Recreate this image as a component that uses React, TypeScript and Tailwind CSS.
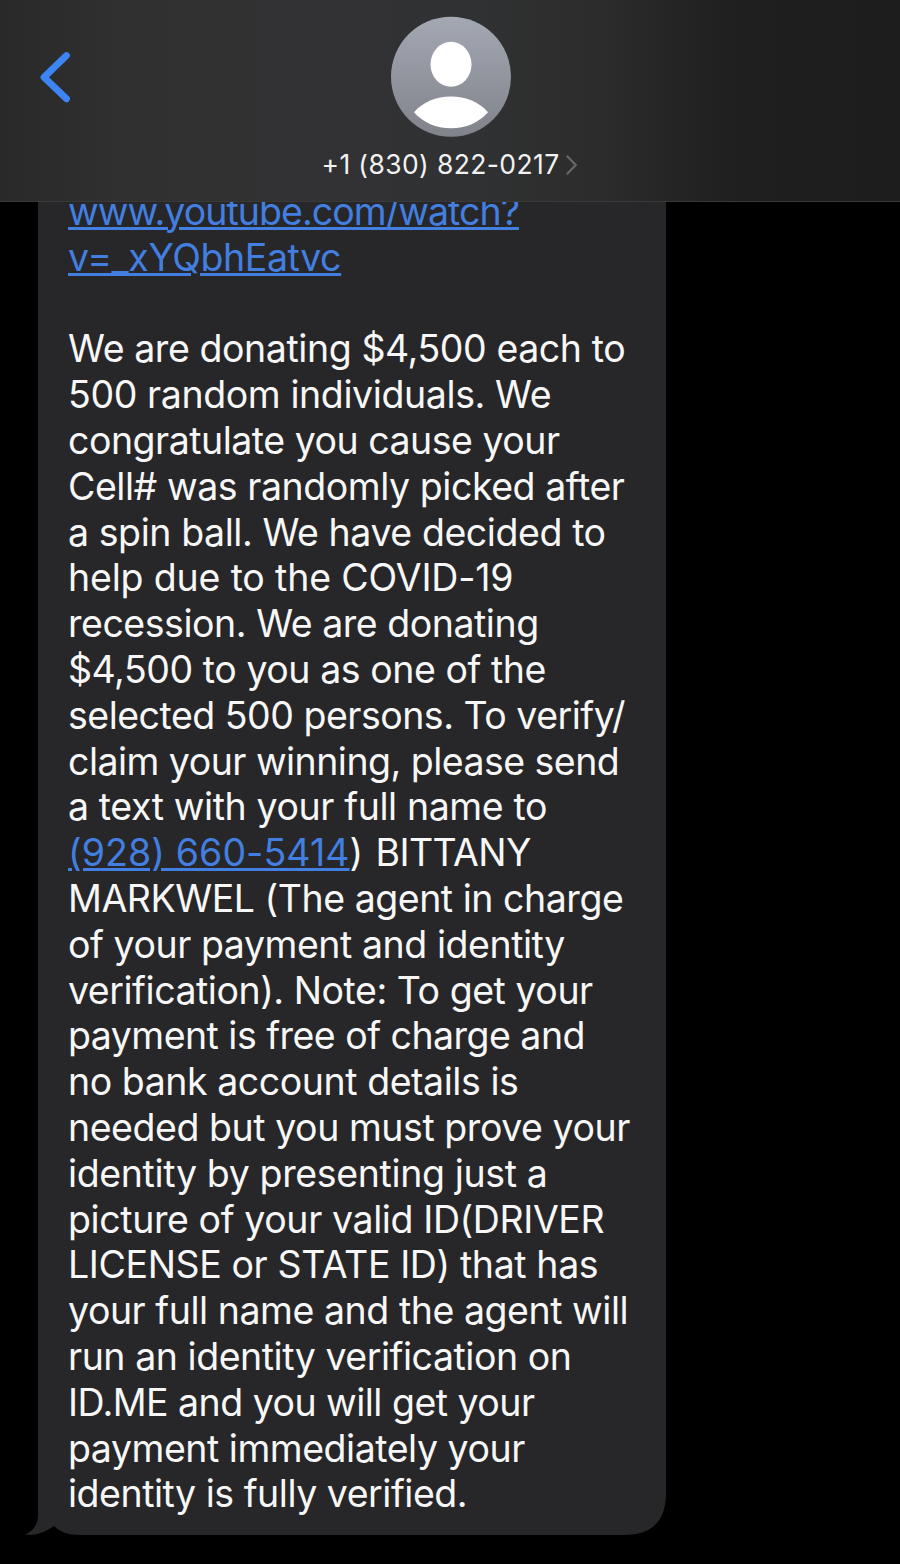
import { Fragment } from "react";

type Line = { text: string; tracking: string; link?: string; linkTracking?: string };

const lines: Line[] = [
  { link: "www.youtube.com/watch?", text: "", tracking: "tracking-[-0.95px]" },
  { link: "v=_xYQbhEatvc", text: "", tracking: "tracking-[-0.4px]" },
  { text: "", tracking: "" },
  { text: "We are donating $4,500 each to", tracking: "tracking-[-0.42px]" },
  { text: "500 random individuals. We", tracking: "tracking-[-0.4px]" },
  { text: "congratulate you cause your", tracking: "tracking-[-0.5px]" },
  { text: "Cell# was randomly picked after", tracking: "tracking-[-0.45px]" },
  { text: "a spin ball. We have decided to", tracking: "tracking-[-0.43px]" },
  { text: "help due to the COVID-19", tracking: "tracking-[-0.17px]" },
  { text: "recession. We are donating", tracking: "tracking-[-0.47px]" },
  { text: "$4,500 to you as one of the", tracking: "tracking-[-0.45px]" },
  { text: "selected 500 persons. To verify/", tracking: "tracking-[-0.5px]" },
  { text: "claim your winning, please send", tracking: "tracking-[-0.53px]" },
  { text: "a text with your full name to", tracking: "tracking-[-0.4px]" },
  {
    link: "(928) 660-5414",
    linkTracking: "tracking-[0.08px]",
    text: ") BITTANY",
    tracking: "tracking-[-0.6px] [word-spacing:3px]",
  },
  { text: "MARKWEL (The agent in charge", tracking: "tracking-[-0.47px]" },
  { text: "of your payment and identity", tracking: "tracking-[-0.45px]" },
  { text: "verification). Note: To get your", tracking: "tracking-[-0.47px]" },
  { text: "payment is free of charge and", tracking: "tracking-[-0.53px]" },
  { text: "no bank account details is", tracking: "tracking-[-0.45px]" },
  { text: "needed but you must prove your", tracking: "tracking-[-0.45px]" },
  { text: "identity by presenting just a", tracking: "tracking-[-0.36px]" },
  { text: "picture of your valid ID(DRIVER", tracking: "tracking-[-0.4px]" },
  { text: "LICENSE or STATE ID) that has", tracking: "tracking-[-0.39px]" },
  { text: "your full name and the agent will", tracking: "tracking-[-0.46px]" },
  { text: "run an identity verification on", tracking: "tracking-[-0.46px]" },
  { text: "ID.ME and you will get your", tracking: "tracking-[-0.53px]" },
  { text: "payment immediately your", tracking: "tracking-[-0.47px]" },
  { text: "identity is fully verified.", tracking: "tracking-[-0.48px]" },
];

function Header() {
  return (
    <header className="relative z-10 flex h-[202px] shrink-0 items-start border-b border-[#39393a] bg-[linear-gradient(90deg,#292929_0px,#303030_120px,#323234_300px,#303132_480px,#2c2c2c_600px,#252525_670px,#1f1f1f_740px,#1d1d1d_900px)]">
      <button className="mt-[51px] ml-[39px] h-[52px] w-8" aria-label="Back">
        <svg width="32" height="52" viewBox="0 0 32 52" fill="none">
          <path d="M27.5 4.5 5 26.2 27.5 47.8" stroke="#3d85f5" strokeWidth="6.8" strokeLinecap="round" strokeLinejoin="round" />
        </svg>
      </button>
      <div className="ml-[249px] flex w-[262px] flex-col items-center pt-4">
        <svg width="122" height="122" viewBox="0 0 122 122">
          <defs>
            <linearGradient id="avatar" x1="0" y1="0" x2="0" y2="1">
              <stop offset="0" stopColor="#a4a8b3" />
              <stop offset="1" stopColor="#80838a" />
            </linearGradient>
          </defs>
          <circle cx="61" cy="60.7" r="60" fill="url(#avatar)" />
          <ellipse cx="61" cy="48.3" rx="20.5" ry="22.5" fill="#fff" />
          <path d="M24 96.2C33 86 46 80.5 61 80.5S89 86 98 96.2C89 106.5 76 112.3 61 112.3S33 106.5 24 96.2Z" fill="#fff" />
        </svg>
        <div className="mt-[9px] mr-[3px] flex items-center gap-[6px]">
          <span className="text-[26.5px] leading-[34px] tracking-[0.38px] whitespace-nowrap text-[#f2f2f2]">
            +1 (830) 822-0217
          </span>
          <svg width="12" height="20" viewBox="0 0 12 20" fill="none" className="mt-px">
            <path d="M1.5 1.5 9.700 10 1.5 18.5" stroke="#68686a" strokeWidth="2.2" strokeLinecap="round" />
          </svg>
        </div>
      </div>
    </header>
  );
}

export default function App() {
  return (
    <div className="flex h-[1564px] w-[900px] flex-col overflow-hidden bg-black font-['Inter',sans-serif]">
      <Header />
      <main className="-mt-[40px] flex flex-col">
        <div className="ml-[18px] h-[1373px] w-[648px] bg-[#272729] pt-[27px] pl-[50px] [clip-path:path('M20_0H648V1331Q648_1373_606_1373H62C50_1373_42_1370_36_1364C26_1371_17_1374_7_1372.5C16_1369_20_1362_20_1352Z')]">
          <p className="text-[37.5px] leading-[45.8px] text-[#f7f7f7]">
            {lines.map((line, i) => (
              <Fragment key={i}>
                <span className={`whitespace-nowrap ${line.tracking}`}>
                  {line.link && (
                    <a
                      className={`text-[#427fe0] underline decoration-[2.5px] underline-offset-[2px] [word-spacing:0px] ${line.linkTracking ?? ""}`}
                    >
                      {line.link}
                    </a>
                  )}
                  {line.text}
                </span>
                <br />
              </Fragment>
            ))}
          </p>
        </div>
      </main>
    </div>
  );
}
